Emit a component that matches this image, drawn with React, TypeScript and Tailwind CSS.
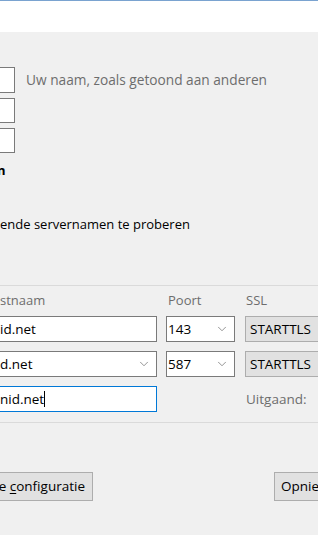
import { ChevronDown } from "lucide-react";

const FONT = { fontFamily: '"Open Sans", "Noto Sans", "Liberation Sans", sans-serif' };

function Chevron({ className = "" }: { className?: string }) {
  return <ChevronDown className={`size-3.5 shrink-0 text-[#6d6d6d] ${className}`} strokeWidth={1.25} />;
}

function SelectBox({ value, className = "" }: { value: string; className?: string }) {
  return (
    <div
      className={`h-[26px] shrink-0 bg-white border border-[#7a7a7a] flex items-center justify-between pl-[1px] pr-[5px] text-[13.5px] text-black ${className}`}
    >
      <span>{value}</span>
      <Chevron />
    </div>
  );
}

function TlsButton() {
  return (
    <div className="h-[26px] w-[90px] shrink-0 bg-[#e1e1e1] border border-[#adadad] flex items-center pl-[4px] text-[13.5px] text-black">
      STARTTLS
    </div>
  );
}

export default function App() {
  return (
    <div className="w-[318px] h-[535px] overflow-hidden bg-[#f0f0f0] flex flex-col" style={FONT}>
      {/* ── Titelbalk-rand ── */}
      <div className="h-px shrink-0 bg-[#7aa3d0]" />
      <div className="h-[31px] shrink-0 bg-white" />

      {/* ── Naam / e-mail / wachtwoord ── */}
      <div className="mt-[35px] flex flex-col gap-[5px]">
        <div className="flex items-center gap-[11px]">
          <div className="w-[31px] h-[26px] shrink-0 -ml-4 bg-white border border-[#7a7a7a]" />
          <span className="text-[13.7px] text-[#6d6d6d] whitespace-nowrap">Uw naam, zoals getoond aan anderen</span>
        </div>
        <div className="w-[31px] h-[25px] -ml-4 bg-white border border-[#7a7a7a]" />
        <div className="w-[31px] h-[25px] -ml-4 bg-white border border-[#7a7a7a]" />
      </div>

      <div className="mt-[11px] h-[14px] flex items-center -ml-[3px] text-[13px] font-bold text-black">n</div>

      <div className="mt-[37px] h-[20px] flex items-center text-[13px] text-black whitespace-nowrap">
        ende servernamen te proberen
      </div>

      <div className="mt-[50px] h-px shrink-0 bg-[#dadada]" />

      {/* ── Servertabel ── */}
      <div className="mt-[6px] h-[18px] flex items-center text-[13px] text-[#6d6d6d]">
        <span className="w-[168px] shrink-0">stnaam</span>
        <span className="w-[78px] shrink-0">Poort</span>
        <span>SSL</span>
      </div>

      <div className="mt-[6px] flex flex-col gap-[9px]">
        <div className="flex items-center">
          <div className="w-[157px] h-[26px] shrink-0 bg-white border border-l-0 border-[#7a7a7a] flex items-center text-[13.5px] text-black">
            id.net
          </div>
          <SelectBox value="143" className="ml-[9px] w-[69px]" />
          <div className="ml-[10px] shrink-0">
            <TlsButton />
          </div>
        </div>
        <div className="flex items-center">
          <div className="w-[157px] h-[26px] shrink-0 bg-white border border-l-0 border-[#7a7a7a] flex items-center justify-between pr-[5px] text-[13.5px] text-black">
            <span>d.net</span>
            <Chevron />
          </div>
          <SelectBox value="587" className="ml-[9px] w-[69px]" />
          <div className="ml-[10px] shrink-0">
            <TlsButton />
          </div>
        </div>
        <div className="flex items-center">
          <div className="w-[157px] h-[26px] shrink-0 bg-white border border-l-0 border-[#0078d7] flex items-center text-[13.5px] text-black">
            <span>nid.net</span>
            <span className="w-px h-[16px] bg-black" />
          </div>
          <span className="ml-[89px] text-[13.5px] text-[#6d6d6d] whitespace-nowrap">Uitgaand:</span>
        </div>
      </div>

      <div className="mt-[10px] h-px shrink-0 bg-[#dadada]" />

      {/* ── Knoppen ── */}
      <div className="mt-[49px] flex items-center justify-between">
        <div className="h-[29px] w-[93px] shrink-0 bg-[#e1e1e1] border border-l-0 border-[#adadad] flex items-center justify-end pr-[7px] text-[13.5px] text-black whitespace-nowrap">
          e&nbsp;<span className="underline underline-offset-2">c</span>onfiguratie
        </div>
        <div className="h-[29px] w-[60px] shrink-0 -mr-4 bg-[#e1e1e1] border border-[#adadad] flex items-center pl-[6px] text-[13.5px] text-black">
          Opnieuw
        </div>
      </div>
    </div>
  );
}
